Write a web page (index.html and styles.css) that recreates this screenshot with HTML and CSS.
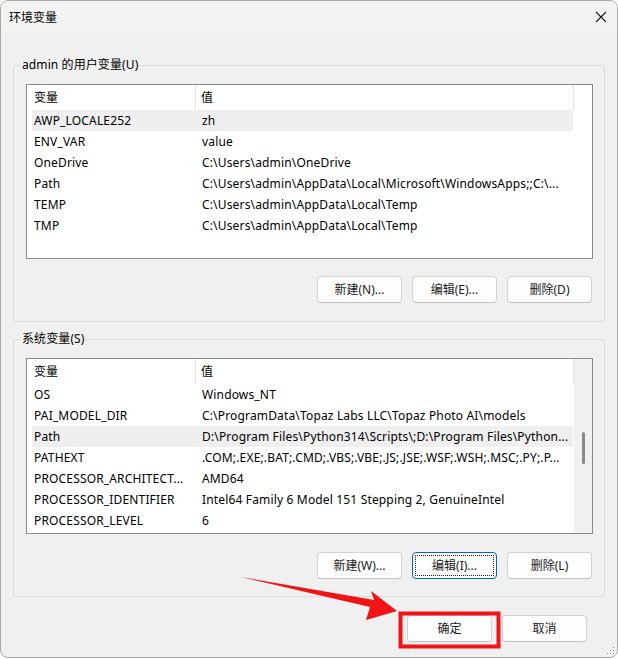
FILE: index.html
```html
<!DOCTYPE html>
<html lang="zh-CN">
<head>
<meta charset="utf-8">
<title>环境变量</title>
<link rel="stylesheet" href="styles.css">
</head>
<body>
<div class="window">
  <div class="titlebar">
    <span class="title">环境变量</span>
    <svg class="close" width="12" height="12" viewBox="0 0 12 12"><path d="M1 1 L11 11 M11 1 L1 11" stroke="#1a1a1a" stroke-width="1.1" fill="none"/></svg>
  </div>
  <div class="content">
    <fieldset class="group group-user">
      <legend>admin 的用户变量(U)</legend>
      <div class="list">
        <div class="list-main">
          <div class="lv-head"><div class="h1">变量</div><div class="h2">值</div></div>
          <div class="row sel"><span class="c1">AWP_LOCALE252</span><span class="c2">zh</span></div>
          <div class="row"><span class="c1">ENV_VAR</span><span class="c2">value</span></div>
          <div class="row"><span class="c1">OneDrive</span><span class="c2">C:\Users\admin\OneDrive</span></div>
          <div class="row"><span class="c1">Path</span><span class="c2">C:\Users\admin\AppData\Local\Microsoft\WindowsApps;;C:\...</span></div>
          <div class="row"><span class="c1">TEMP</span><span class="c2">C:\Users\admin\AppData\Local\Temp</span></div>
          <div class="row"><span class="c1">TMP</span><span class="c2">C:\Users\admin\AppData\Local\Temp</span></div>
        </div>
        <div class="vscroll blank"></div>
      </div>
      <div class="btns btns-user">
        <button class="btn">新建(N)...</button>
        <button class="btn">编辑(E)...</button>
        <button class="btn">删除(D)</button>
      </div>
    </fieldset>

    <fieldset class="group group-sys">
      <legend>系统变量(S)</legend>
      <div class="list">
        <div class="list-main">
          <div class="lv-head"><div class="h1">变量</div><div class="h2">值</div></div>
          <div class="row"><span class="c1">OS</span><span class="c2">Windows_NT</span></div>
          <div class="row"><span class="c1">PAI_MODEL_DIR</span><span class="c2">C:\ProgramData\Topaz Labs LLC\Topaz Photo AI\models</span></div>
          <div class="row sel"><span class="c1">Path</span><span class="c2">D:\Program Files\Python314\Scripts\;D:\Program Files\Python...</span></div>
          <div class="row"><span class="c1">PATHEXT</span><span class="c2">.COM;.EXE;.BAT;.CMD;.VBS;.VBE;.JS;.JSE;.WSF;.WSH;.MSC;.PY;.P...</span></div>
          <div class="row"><span class="c1">PROCESSOR_ARCHITECT...</span><span class="c2">AMD64</span></div>
          <div class="row"><span class="c1">PROCESSOR_IDENTIFIER</span><span class="c2">Intel64 Family 6 Model 151 Stepping 2, GenuineIntel</span></div>
          <div class="row"><span class="c1">PROCESSOR_LEVEL</span><span class="c2">6</span></div>
        </div>
        <div class="vscroll"><div class="thumb"></div></div>
      </div>
      <div class="btns btns-sys">
        <button class="btn">新建(W)...</button>
        <button class="btn focus">编辑(I)...</button>
        <button class="btn">删除(L)</button>
      </div>
    </fieldset>

    <div class="dialog-btns">
      <button class="btn">确定</button>
      <button class="btn">取消</button>
    </div>
  </div>
  <svg class="grip" width="10" height="10" viewBox="0 0 10 10">
    <rect x="8" y="2" width="1" height="1" fill="#999"/>
    <rect x="5" y="5" width="1" height="1" fill="#999"/>
    <rect x="8" y="5" width="1" height="1" fill="#999"/>
    <rect x="2" y="8" width="1" height="1" fill="#999"/>
    <rect x="5" y="8" width="1" height="1" fill="#999"/>
    <rect x="8" y="8" width="1" height="1" fill="#999"/>
  </svg>
</div>
<svg class="annot" width="618" height="659" viewBox="0 0 618 659">
  <polygon points="241,577 374,600 371,591 397,611 366,620 370,607" fill="#f01414"/>
  <rect x="400.5" y="613.5" width="98" height="33" fill="none" stroke="#f01414" stroke-width="4"/>
</svg>
</body>
</html>
```

FILE: styles.css
```css
* { box-sizing: border-box; }
html, body { margin: 0; padding: 0; }
body {
  background: #ffffff;
  font-family: "Noto Sans", "Noto Sans CJK SC", sans-serif;
  font-size: 12px;
  color: #000;
  width: 618px;
  height: 659px;
  position: relative;
  overflow: hidden;
}
.window {
  width: 618px;
  height: 658px;
  border: 1px solid #a9a9a9;
  border-radius: 8px;
  background: #f0f0f0;
  overflow: hidden;
  display: flex;
  flex-direction: column;
  position: relative;
}
.titlebar {
  height: 30px;
  background: #f3f3f3;
  display: flex;
  align-items: center;
  justify-content: space-between;
  padding: 0 10px 0 8px;
  flex: none;
}
.title { font-size: 12px; font-family: "Noto Sans CJK SC", sans-serif; }
.close { display: block; margin-top: 1px; }
.content {
  padding-top: 26px;
  display: flex;
  flex-direction: column;
}
.group {
  margin: 0 12px;
  padding: 0 11px 0 12px;
  border: 1px solid #dcdcdc;
  border-radius: 3px;
  min-width: 0;
}
.group legend {
  font-family: "Noto Sans", "Noto Sans CJK SC", sans-serif;
  letter-spacing: 0.1px;
  line-height: 16px;
  height: 16px;
  padding: 0 1px;
  margin-left: -5px;
}
.group-sys { margin-top: 9px; }
.list {
  margin-top: 11px;
  height: 175px;
  border: 1px solid #868a91;
  background: #fff;
  display: flex;
  overflow: hidden;
}
.group-sys .list { height: 176px; }
.list-main {
  flex: 1;
  min-width: 0;
}
.lv-head {
  height: 25px;
  display: flex;
  border-right: 1px solid #e3e3e3;
}
.h1 {
  width: 169px;
  padding-left: 7px;
  line-height: 24px;
  border-right: 1px solid #e5e5e5;
  font-family: "Noto Sans CJK SC", sans-serif;
}
.h2 {
  flex: 1;
  padding-left: 5px;
  line-height: 24px;
  font-family: "Noto Sans CJK SC", sans-serif;
}
.row {
  height: 21px;
  line-height: 21px;
  margin: 0 1px 0 5px;
  display: flex;
  white-space: nowrap;
  letter-spacing: 0.16px;
}
.row.sel { background: #efefef; }
.c1 {
  width: 164px;
  flex: none;
  padding: 0 2px 0 2px;
  overflow: hidden;
}
.c2 {
  flex: 1;
  min-width: 0;
  padding: 0 2px 0 6px;
  overflow: hidden;
}
.vscroll {
  width: 18px;
  flex: none;
  background: #f0f0f0;
  position: relative;
  display: flex;
  justify-content: center;
  padding-top: 73px;
}
.vscroll.blank { background: #fff; }
.thumb {
  width: 3px;
  height: 32px;
  border-radius: 2px;
  background: #8a8a8a;
  margin-left: 1px;
}
.btns {
  display: flex;
  justify-content: flex-end;
  gap: 10px;
  margin-right: 1px;
}
.btns-user { margin-top: 17px; margin-bottom: 18px; }
.btns-sys { margin-top: 18px; margin-bottom: 17px; }
.btn {
  width: 85px;
  height: 27px;
  border: 1px solid #d2d2d2;
  border-bottom-color: #c0c0c0;
  border-radius: 4px;
  background: #fdfdfd;
  font-family: "Noto Sans", "Noto Sans CJK SC", sans-serif;
  font-size: 12px;
  color: #1a1a1a;
  padding: 0;
  line-height: 25px;
}
.btn.focus {
  border-color: #0067c0;
  outline: 1px dotted #222;
  outline-offset: -4px;
}
.dialog-btns {
  display: flex;
  justify-content: flex-end;
  gap: 10px;
  margin-top: 18px;
  padding-right: 30px;
}
.grip {
  position: absolute;
  right: 2px;
  bottom: 2px;
}
.annot {
  position: absolute;
  left: 0;
  top: 0;
  pointer-events: none;
}
```
